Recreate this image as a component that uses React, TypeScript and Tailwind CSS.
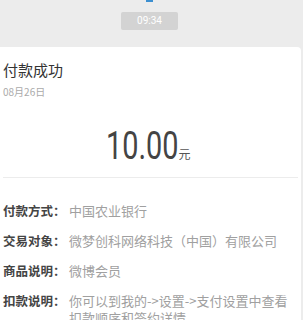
const rows = [
  { label: "付款方式", value: "中国农业银行" },
  { label: "交易对象", value: "微梦创科网络科技（中国）有限公司" },
  { label: "商品说明", value: "微博会员" },
  { label: "扣款说明", value: "你可以到我的->设置->支付设置中查看扣款顺序和签约详情" },
];

export default function App() {
  return (
    <div className="w-[303px] h-[320px] overflow-hidden bg-[#ececec] font-['Noto_Sans_CJK_SC',sans-serif]">
      <div className="relative h-[47px] flex justify-center pt-[12px]">
        <div className="absolute top-0 left-[146px] w-[7px] h-[2px] bg-[#3c8fd0]" />
        <div className="ml-[-4px] w-[57px] h-[18px] rounded-[2px] bg-[#d3d3d3] text-white text-[10px] leading-[18px] text-center font-['Roboto',sans-serif]">
          09:34
        </div>
      </div>
      <div className="mr-[2px] h-[273px] bg-white rounded-tr-[4px]">
        <div className="px-[3px] pt-[13px]">
          <div className="text-[15px] leading-[20px] text-[#333]">付款成功</div>
          <div className="mt-[5px] text-[10px] leading-[14px] text-[#aaa]">08月26日</div>
        </div>
        <div className="mt-[28px] flex justify-center items-baseline pr-[4px]">
          <span className="inline-block w-[72px] font-['Roboto',sans-serif] text-[39px] leading-[38px] text-[#444]">
            <span className="inline-block origin-left scale-x-[0.74] whitespace-nowrap">10.00</span>
          </span>
          <span className="text-[12px] leading-[16px] text-[#555]">元</span>
        </div>
        <div className="mx-[3px] mt-[12px] border-t border-[#ececec]" />
        <div className="px-[3px] pt-[24px] flex flex-col gap-[13px]">
          {rows.map((r) => (
            <div key={r.label} className="flex leading-[17px]">
              <span className="shrink-0 w-[66px] text-[12.5px] font-bold text-[#444]">{r.label}：</span>
              <span className="text-[13px] text-[#a0a0a0] w-[226px]">{r.value}</span>
            </div>
          ))}
        </div>
      </div>
    </div>
  );
}
